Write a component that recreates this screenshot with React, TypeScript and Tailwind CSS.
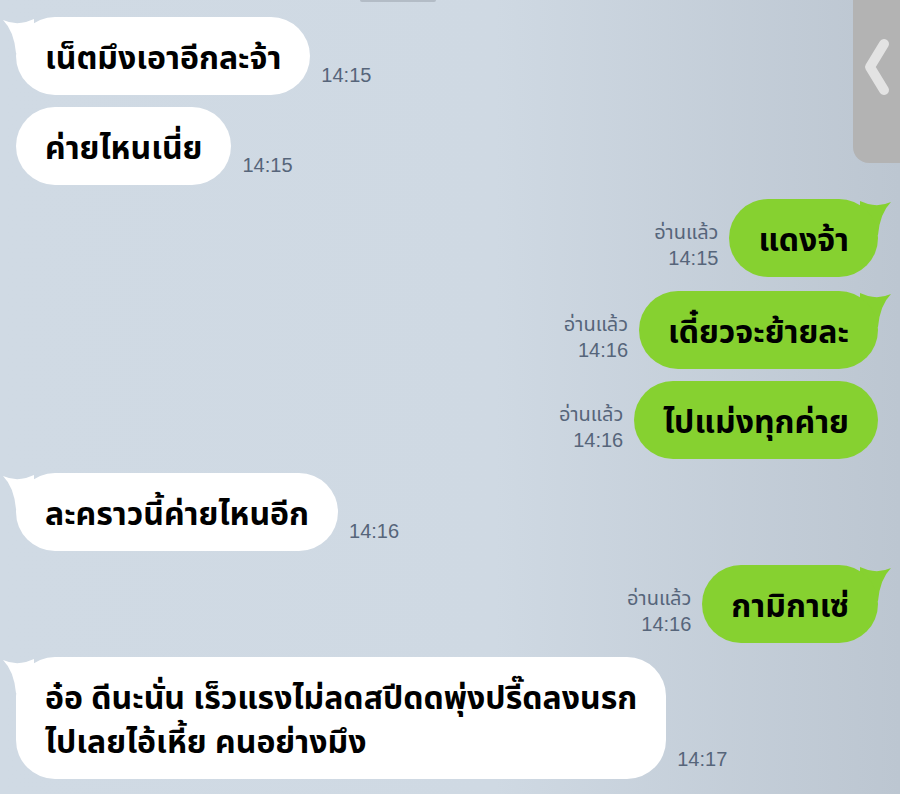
import React from "react";

const thai = { fontFamily: '"Noto Sans Thai", Thonburi, "Noto Sans", "DejaVu Sans", sans-serif' };
const meta = { fontFamily: '"Liberation Sans", Arial, "Noto Sans Thai", sans-serif' };

function LeftTail() {
  return (
    <svg className="absolute left-[-16px] top-0" width="40" height="50" viewBox="0 0 40 50">
      <path d="M3 3 Q14 8 26 5 L34 2 L34 40 L16 36 Q14 14 3 3 Z" fill="#ffffff" />
    </svg>
  );
}

function RightTail() {
  return (
    <svg className="absolute right-[-16px] top-0" width="40" height="50" viewBox="0 0 40 50">
      <path d="M37 3 Q26 8 14 5 L6 2 L6 40 L24 36 Q26 14 37 3 Z" fill="#86d130" />
    </svg>
  );
}

function Received({ text, time, tail }: { text: React.ReactNode; time: string; tail?: boolean }) {
  return (
    <div className="flex items-end pl-[16px]">
      <div className="relative">
        {tail && <LeftTail />}
        <div
          className="relative bg-white rounded-[39px] pl-[29px] pr-[29px] pt-[20px] pb-[14px] text-[32px] leading-[44px] font-bold text-black whitespace-nowrap"
          style={thai}
        >
          {text}
        </div>
      </div>
      <div className="ml-[11px] mb-[10px] text-[20px] leading-[20px] text-[#56657a]" style={meta}>
        {time}
      </div>
    </div>
  );
}

function Sent({ text, time, tail }: { text: string; time: string; tail?: boolean }) {
  return (
    <div className="flex items-end justify-end pr-[22px]">
      <div className="mr-[11px] mb-[9px] flex flex-col items-end text-[#56657a]">
        <div className="text-[20px] leading-[22px]" style={thai}>อ่านแล้ว</div>
        <div className="mt-[4px] text-[20px] leading-[20px]" style={meta}>{time}</div>
      </div>
      <div className="relative">
        {tail && <RightTail />}
        <div
          className="relative bg-[#86d130] rounded-[39px] px-[29px] pt-[20px] pb-[14px] text-[32px] leading-[44px] font-bold text-black whitespace-nowrap"
          style={thai}
        >
          {text}
        </div>
      </div>
    </div>
  );
}

export default function App() {
  return (
    <div className="relative w-[900px] h-[794px] overflow-hidden bg-[linear-gradient(90deg,#d0dae4_0%,#cfd9e3_55%,#bcc6d1_100%)]">
      <div className="absolute left-[360px] top-0 w-[76px] h-[2px] rounded-b bg-[#b3bcc6]" />
      <div className="absolute right-0 top-0 w-[47px] h-[163px] bg-[#b3b3b3] rounded-bl-[16px]">
        <svg width="47" height="163" viewBox="0 0 47 163">
          <path d="M31 44 L17 67 L31 90" fill="none" stroke="#e3e3e3" strokeWidth="10" strokeLinecap="round" strokeLinejoin="round" />
        </svg>
      </div>
      <div className="flex flex-col pt-[17px]">
        <Received text="เน็ตมึงเอาอีกละจ้า" time="14:15" tail />
        <div className="h-[12px]" />
        <Received text="ค่ายไหนเนี่ย" time="14:15" />
        <div className="h-[14px]" />
        <Sent text="แดงจ้า" time="14:15" tail />
        <div className="h-[14px]" />
        <Sent text="เดี๋ยวจะย้ายละ" time="14:16" tail />
        <div className="h-[12px]" />
        <Sent text="ไปแม่งทุกค่าย" time="14:16" />
        <div className="h-[14px]" />
        <Received text="ละคราวนี้ค่ายไหนอีก" time="14:16" tail />
        <div className="h-[14px]" />
        <Sent text="กามิกาเซ่" time="14:16" tail />
        <div className="h-[14px]" />
        <Received
          text={
            <>
              <div>อ๋อ ดีนะนั่น เร็วแรงไม่ลดสปีดดพุ่งปรี๊ดลงนรก</div>
              <div>ไปเลยไอ้เหี้ย คนอย่างมึง</div>
            </>
          }
          time="14:17"
          tail
        />
      </div>
    </div>
  );
}
